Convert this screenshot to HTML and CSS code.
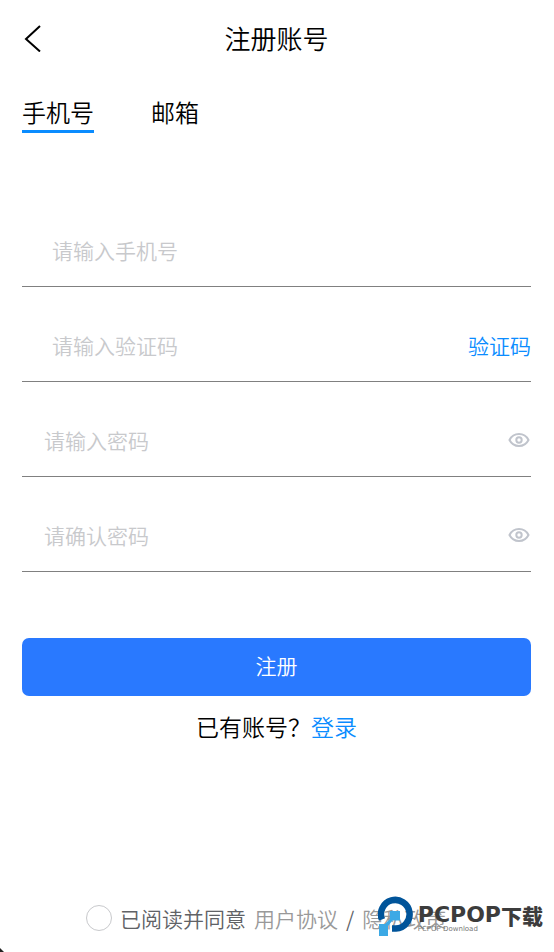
FILE: index.html
```html
<!DOCTYPE html>
<html lang="zh-CN">
<head>
<meta charset="utf-8">
<meta name="viewport" content="width=device-width, initial-scale=1">
<title>注册账号</title>
<link rel="stylesheet" href="styles.css">
</head>
<body>
<div class="page">
  <header class="bar">
    <button class="back" type="button" aria-label="返回">
      <svg width="20" height="28" viewBox="0 0 20 28" fill="none" stroke="#000" stroke-width="2"><path d="M18 2L4 15l14 12.500"/></svg>
    </button>
    <h1 class="title">注册账号</h1>
  </header>
  <nav class="tabs">
    <button class="tab tab-active" type="button">手机号</button>
    <button class="tab" type="button">邮箱</button>
  </nav>
  <form class="form">
    <div class="field field-inset">
      <input class="input" type="tel" aria-label="手机号" placeholder="请输入手机号">
    </div>
    <div class="field field-inset">
      <input class="input" type="text" aria-label="验证码" placeholder="请输入验证码">
      <button class="code" type="button">验证码</button>
    </div>
    <div class="field">
      <input class="input" type="password" aria-label="密码" placeholder="请输入密码">
      <button class="eye" type="button" aria-label="显示密码">
        <svg width="24" height="16" viewBox="0 0 24 16" fill="none" stroke="#c0c4cc" stroke-width="2"><path d="M2.500 8C4.500 4 8 2 12 2s7.500 2 9.500 6c-2 4-5.500 6-9.500 6S4.500 12 2.500 8z"/><circle cx="12" cy="8" r="2.700"/></svg>
      </button>
    </div>
    <div class="field">
      <input class="input" type="password" aria-label="确认密码" placeholder="请确认密码">
      <button class="eye" type="button" aria-label="显示密码">
        <svg width="24" height="16" viewBox="0 0 24 16" fill="none" stroke="#c0c4cc" stroke-width="2"><path d="M2.500 8C4.500 4 8 2 12 2s7.500 2 9.500 6c-2 4-5.500 6-9.500 6S4.500 12 2.500 8z"/><circle cx="12" cy="8" r="2.700"/></svg>
      </button>
    </div>
    <button class="submit" type="button">注册</button>
  </form>
  <p class="login">已有账号？<a class="link" href="#login">登录</a></p>
  <footer class="agree">
    <input class="tick" id="agree" type="checkbox">
    <label class="agree-text" for="agree">已阅读并同意</label>
    <a class="policy" href="#terms">用户协议</a>
    <span class="agree-text">/</span>
    <a class="policy" href="#privacy">隐私政策</a>
  </footer>
  <div class="mark">
    <svg class="mark-logo" width="36" height="42" viewBox="0 0 36 42" fill="none"><path d="M4 24.500A14.300 14.300 0 1 1 18 33.500H14" stroke="#00549a" stroke-width="6.500"/><path d="M12 16H22V25.500H14.500L10 31V41H1V29H7L12 24z" fill="#3ca9e5"/></svg>
    <div class="mark-words">
      <div class="mark-name">PCPOP<span class="mark-cn">下载</span></div>
      <div class="mark-sub">PCPOP Download</div>
    </div>
  </div>
  <span class="corner"></span>
</div>
</body>
</html>
```
FILE: styles.css
```css
* { box-sizing: border-box; }

body {
  margin: 0;
  background: #fff;
  color: #000;
  font-family: "Noto Sans CJK SC", sans-serif;
  font-weight: 350;
}

button, input {
  font: inherit;
  color: inherit;
  padding: 0;
  border: 0;
  background: none;
}

a { text-decoration: none; }

.page {
  position: relative;
  display: flex;
  flex-direction: column;
  min-height: 100vh;
  padding: 0 23px 17px 22px;
}

.bar {
  display: grid;
  grid-template-columns: 40px 1fr 40px;
  align-items: center;
  height: 75px;
}

.back, .eye { display: flex; }

.title {
  margin: 0;
  font-size: 26px;
  line-height: 40px;
  font-weight: inherit;
  text-align: center;
}

.tabs {
  display: flex;
  gap: 57px;
  margin-top: 20px;
  font-size: 24px;
  line-height: 34px;
}

.tab {
  padding-bottom: 1px;
  border-bottom: 3px solid transparent;
}

.tab-active { border-color: #0a8cff; }

.form {
  display: flex;
  flex-direction: column;
  gap: 22px;
  margin-top: 81px;
  font-size: 21px;
}

.field {
  display: flex;
  align-items: center;
  height: 73px;
  padding: 0 0 1px 22px;
  border-bottom: 1px solid #808080;
}

.field-inset { padding-left: 30px; }

.input {
  flex: 1;
  min-width: 0;
  height: 40px;
  outline: 0;
}

.input::placeholder { color: #c8c9cc; opacity: 1; }

.code, .link { color: #0a8cff; }

.submit {
  height: 58px;
  margin-top: 44px;
  padding-bottom: 4px;
  border-radius: 7px;
  background: #2979ff;
  color: #fff;
}

.login {
  margin: 12px 0 0;
  font-size: 23px;
  line-height: 36px;
  text-align: center;
}

.agree {
  display: flex;
  align-items: center;
  gap: 8px;
  margin-top: auto;
  padding-left: 64px;
  font-size: 21px;
  line-height: 34px;
  white-space: nowrap;
}

.tick {
  appearance: none;
  width: 26px;
  height: 26px;
  margin: 0;
  border: 1px solid #c8c9cc;
  border-radius: 50%;
}

.agree-text { color: #606266; }
.policy { color: #999; }

.mark {
  position: absolute;
  right: 11px;
  bottom: 15px;
  display: flex;
  gap: 4px;
  white-space: nowrap;
}

.mark-words { padding-top: 10px; }

.mark-name {
  display: flex;
  font: bold 22px/20px "DejaVu Sans", sans-serif;
  color: #3c3c3c;
}

.mark-cn {
  font-family: "Noto Sans CJK SC", sans-serif;
  font-size: 21px;
  font-weight: 900;
}

.mark-sub {
  font: 7px/8px "DejaVu Sans", sans-serif;
  color: #777;
}

.corner {
  position: absolute;
  left: 0;
  bottom: 0;
  width: 4px;
  height: 4px;
  background: #222;
  clip-path: polygon(0 0, 100% 100%, 0 100%);
}
```
